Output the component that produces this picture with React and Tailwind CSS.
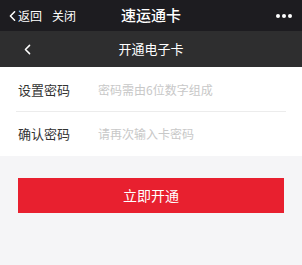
import React from 'react';

const cjk = { fontFamily: '"Noto Sans CJK SC", "Noto Sans", sans-serif' };

function Chevron({ className }) {
  return (
    <svg viewBox="0 0 10 16" className={className} fill="none" stroke="currentColor" strokeWidth="2.2" strokeLinecap="round" strokeLinejoin="round">
      <path d="M8 2 L2 8 L8 14" />
    </svg>
  );
}

function Field({ label, placeholder, divider }) {
  return (
    <div className="px-[16px]">
      <div className={`flex items-center h-[44px] ${divider ? 'border-b border-[#ececec]' : ''}`}>
        <span className="w-[82px] pl-[2px] text-[13px] text-[#333]">{label}</span>
        <span className="text-[12px] text-[#c8c8c8]">{placeholder}</span>
      </div>
    </div>
  );
}

export default function App() {
  return (
    <div className="w-[302px] h-[265px] bg-[#f5f5f7] overflow-hidden" style={cjk}>
      <header className="h-[31px] bg-[#1d1c20] text-white flex items-center px-[9px] relative">
        <div className="flex items-center gap-[1px] text-[12px]">
          <Chevron className="w-[7px] h-[12px]" />
          <span className="ml-[1px]">返回</span>
          <span className="ml-[9px]">关闭</span>
        </div>
        <div className="absolute left-0 right-0 text-center text-[15px] font-medium pointer-events-none">速运通卡</div>
        <div className="ml-auto flex gap-[2px] pr-[1px]">
          <span className="w-[4px] h-[4px] bg-white rounded-full" />
          <span className="w-[4px] h-[4px] bg-white rounded-full" />
          <span className="w-[4px] h-[4px] bg-white rounded-full" />
        </div>
      </header>
      <div className="h-[36px] bg-[#2e2e2f] text-white flex items-center px-[24px] relative">
        <Chevron className="w-[7px] h-[11px]" />
        <div className="absolute left-0 right-0 text-center text-[13px]">开通电子卡</div>
      </div>
      <section className="bg-white pt-[1px]">
        <Field label="设置密码" placeholder="密码需由6位数字组成" divider />
        <Field label="确认密码" placeholder="请再次输入卡密码" />
      </section>
      <div className="px-[18px] pt-[22px]">
        <button className="w-full h-[35px] bg-[#e8202f] text-white text-[14px]">立即开通</button>
      </div>
    </div>
  );
}
